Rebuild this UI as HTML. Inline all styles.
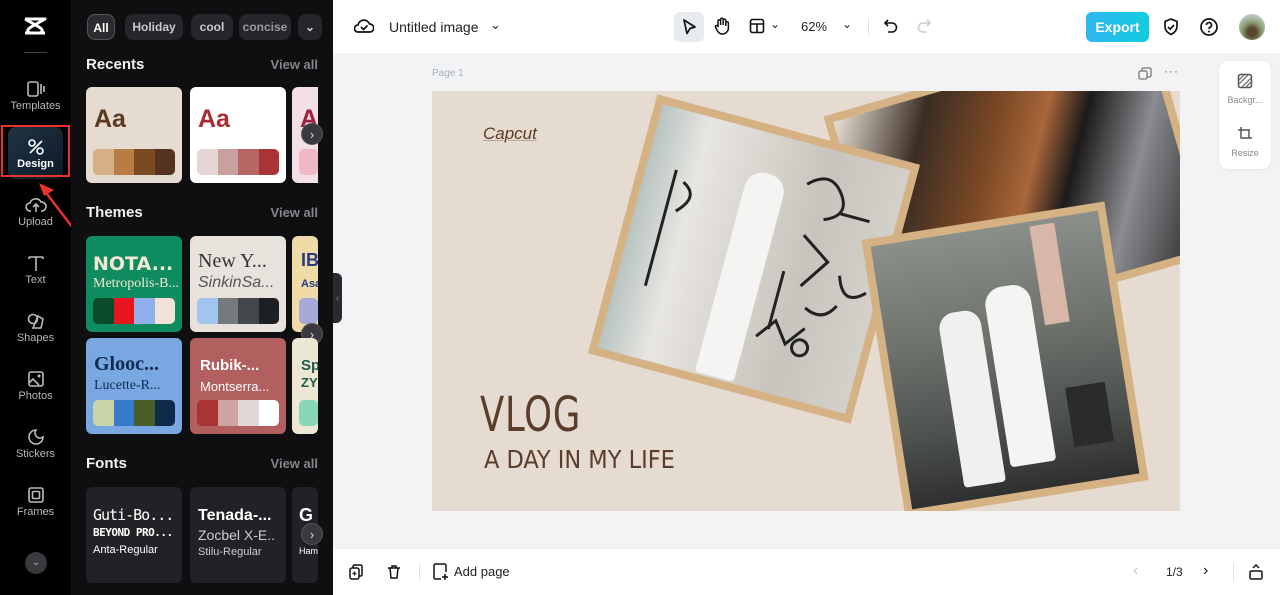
<!DOCTYPE html>
<html><head><meta charset="utf-8"><style>
*{box-sizing:border-box;margin:0;padding:0}
body{width:1280px;height:595px;overflow:hidden;font-family:"Liberation Sans",sans-serif;background:#f1f3f5;position:relative}
.abs{position:absolute;white-space:nowrap}
#rail{left:0;top:0;width:71px;height:595px;background:#000}
.ri{position:absolute;left:0;width:71px;text-align:center;color:#b8b8bc;font-size:11px}
.ri svg{display:block;margin:0 auto 2px}
#panel{left:71px;top:0;width:262px;height:595px;background:#0f0f11}
.chip{position:absolute;top:14px;height:26px;border-radius:8px;background:#26262a;color:#c9c9cc;font-size:12px;font-weight:bold;line-height:26px;text-align:center}
.h{position:absolute;left:15px;color:#f2f2f2;font-size:15px;font-weight:bold}
.va{position:absolute;right:15px;color:#85858a;font-size:13px;font-weight:bold}
.card{position:absolute;width:96px;height:96px;border-radius:6px;overflow:hidden}
.sw{position:absolute;left:7px;right:7px;height:26px;border-radius:5px;overflow:hidden;display:flex}
.sw i{flex:1}
.nxt{position:absolute;width:22px;height:22px;border-radius:50%;background:#3a3a3e;color:#ddd;font-size:13px;line-height:21px;text-align:center;border:1px solid #555}
#top{left:333px;top:0;width:947px;height:53px;background:#fff}
#bot{left:333px;top:549px;width:947px;height:46px;background:#fff}
#page{left:432px;top:91px;width:748px;height:420px;background:#e6dbd1;overflow:hidden}
.fr{position:absolute;background:#d5b283;padding:8px}
.fr>div{width:100%;height:100%;position:relative;overflow:hidden}
</style></head><body>
<div id="rail" class="abs">
  <svg class="abs" style="left:22px;top:16px" width="26" height="20" viewBox="0 0 26 20"><path d="M3 3 L23 3 L9 11 Q3 15 8 17 L23 17 M3 17 L18 17 M3 3 L17 11 Q23 15 18 17" fill="none" stroke="#fff" stroke-width="3" stroke-linejoin="round"/></svg>
  <div class="abs" style="left:24px;top:52px;width:23px;height:1px;background:#444"></div>
  <div class="ri" style="top:80px"><svg width="22" height="18" viewBox="0 0 22 18"><rect x="3" y="2" width="10" height="14" rx="2" fill="none" stroke="#bbb" stroke-width="1.6"/><path d="M16 4v10M19 6v6" stroke="#bbb" stroke-width="1.6"/></svg>Templates</div>
  <div class="abs" style="left:8px;top:127px;width:55px;height:52px;border-radius:8px;background:linear-gradient(135deg,#203445,#0d1a26)"></div>
  <div class="abs" style="left:1px;top:125px;width:69px;height:52px;border:2px solid #e8322f"></div>
  <div class="ri" style="top:138px;color:#fff;font-weight:bold"><svg width="20" height="18" viewBox="0 0 20 18"><circle cx="6" cy="5" r="3" fill="none" stroke="#fff" stroke-width="1.6"/><circle cx="14" cy="13" r="3" fill="none" stroke="#fff" stroke-width="1.6"/><path d="M4 15 L16 3" stroke="#fff" stroke-width="1.6"/></svg>Design</div>
  <svg class="abs" style="left:36px;top:180px" width="44" height="56" viewBox="0 0 44 56"><path d="M40 52 L8 10" stroke="#e8322f" stroke-width="2.5"/><path d="M3 3 L18 10 L8 16 Z" fill="#e8322f"/></svg>
  <div class="ri" style="top:196px"><svg width="22" height="18" viewBox="0 0 22 18"><path d="M6 15 H5 a4 4 0 0 1 0-8 a6 6 0 0 1 11-1 a4 4 0 0 1 1 9 h-1 M11 16 V8 M8 11 l3-3 3 3" fill="none" stroke="#bbb" stroke-width="1.6"/></svg>Upload</div>
  <div class="ri" style="top:254px"><svg width="22" height="18" viewBox="0 0 22 18"><path d="M4 3H18M11 3V17M4 3v2M18 3v2" fill="none" stroke="#bbb" stroke-width="1.6"/></svg>Text</div>
  <div class="ri" style="top:312px"><svg width="22" height="18" viewBox="0 0 22 18"><circle cx="8" cy="7" r="4.5" fill="none" stroke="#bbb" stroke-width="1.6"/><path d="M13 4l5 3-2 9H8z" fill="none" stroke="#bbb" stroke-width="1.6"/></svg>Shapes</div>
  <div class="ri" style="top:370px"><svg width="22" height="18" viewBox="0 0 22 18"><rect x="4" y="2" width="14" height="14" rx="2" fill="none" stroke="#bbb" stroke-width="1.6"/><path d="M4 13l4-4 6 6" fill="none" stroke="#bbb" stroke-width="1.6"/><circle cx="14" cy="6" r="1.5" fill="#bbb"/></svg>Photos</div>
  <div class="ri" style="top:428px"><svg width="22" height="18" viewBox="0 0 22 18"><path d="M11 2a7 7 0 1 0 7 7 a5 5 0 0 1-7-7z" fill="none" stroke="#bbb" stroke-width="1.6"/></svg>Stickers</div>
  <div class="ri" style="top:486px"><svg width="22" height="18" viewBox="0 0 22 18"><rect x="4" y="2" width="14" height="14" rx="2" fill="none" stroke="#bbb" stroke-width="1.6"/><rect x="7.5" y="5.5" width="7" height="7" rx="1" fill="none" stroke="#bbb" stroke-width="1.6"/></svg>Frames</div>
  <div class="abs" style="left:25px;top:552px;width:22px;height:22px;border-radius:50%;background:#3a3a3e;color:#bbb;font-size:10px;text-align:center;line-height:22px">&#8964;</div>
</div>
<div id="panel" class="abs">
  <div class="chip" style="left:16px;width:28px;background:#2c2c30;border:1px solid #555;color:#fff">All</div>
  <div class="chip" style="left:54px;width:58px">Holiday</div>
  <div class="chip" style="left:120px;width:42px">cool</div>
  <div class="chip" style="left:168px;width:52px;color:#9a9a9d">concise</div>
  <div class="chip" style="left:227px;width:24px">&#8964;</div>
  <div class="h" style="top:56px">Recents</div><div class="va" style="top:57px">View all</div>
  <div class="card" style="left:15px;top:87px;background:#e6dbd0"><div class="abs" style="left:8px;top:18px;font-size:25px;font-weight:bold;color:#5a3a20">Aa</div><div class="sw" style="top:62px"><i style="background:#d7b186"></i><i style="background:#b87d45"></i><i style="background:#7b4a22"></i><i style="background:#553320"></i></div></div>
  <div class="card" style="left:119px;top:87px;background:#fff"><div class="abs" style="left:8px;top:18px;font-size:25px;font-weight:bold;color:#a82c33">Aa</div><div class="sw" style="top:62px"><i style="background:#e5d6d6"></i><i style="background:#c9a0a0"></i><i style="background:#b76565"></i><i style="background:#a93436"></i></div></div>
  <div class="card" style="left:221px;top:87px;width:26px;background:#f3e0e4;border-radius:6px 0 0 6px"><div class="abs" style="left:8px;top:18px;font-size:25px;font-weight:bold;color:#a02040">A</div><div class="sw" style="top:62px;right:0"><i style="background:#f0b8c4"></i></div></div>
  <div class="nxt" style="left:230px;top:123px">›</div>
  <div class="h" style="top:204px">Themes</div><div class="va" style="top:205px">View all</div>
  <div class="card" style="left:15px;top:236px;background:#0e8c5f"><div class="abs" style="left:7px;top:17px;font-size:19px;font-weight:900;color:#f3e7d6;font-family:'DejaVu Sans'">NOTA...</div><div class="abs" style="left:7px;top:40px;font-size:14px;color:#f3e7d6;font-family:'Liberation Serif'">Metropolis-B...</div><div class="sw" style="top:62px"><i style="background:#0c4a2c"></i><i style="background:#e8141e"></i><i style="background:#8fb0ea"></i><i style="background:#f5e2d6"></i></div></div>
  <div class="card" style="left:119px;top:236px;background:#e8e2dc"><div class="abs" style="left:8px;top:14px;font-size:20px;color:#333;font-family:'Liberation Serif'">New Y...</div><div class="abs" style="left:8px;top:38px;font-size:16px;color:#555;font-style:italic">SinkinSa...</div><div class="sw" style="top:62px"><i style="background:#a1c5ee"></i><i style="background:#777a7d"></i><i style="background:#44474b"></i><i style="background:#1c1f23"></i></div></div>
  <div class="card" style="left:221px;top:236px;width:26px;background:#efdaa8"><div class="abs" style="left:9px;top:14px;font-size:18px;font-weight:bold;color:#2a3a80">IB</div><div class="abs" style="left:9px;top:42px;font-size:11px;font-weight:bold;color:#2a3a80">Asa</div><div class="sw" style="top:62px;right:0"><i style="background:#a7a9d6"></i></div></div>
  <div class="nxt" style="left:230px;top:323px">›</div>
  <div class="card" style="left:15px;top:338px;background:#78a7e2"><div class="abs" style="left:8px;top:15px;font-size:20px;font-weight:bold;color:#0d2c50;font-family:'Liberation Serif'">Glooc...</div><div class="abs" style="left:8px;top:40px;font-size:14px;color:#0d2c50;font-family:'Liberation Serif'">Lucette-R...</div><div class="sw" style="top:62px"><i style="background:#c9d5a8"></i><i style="background:#367acb"></i><i style="background:#485d2a"></i><i style="background:#0d2a48"></i></div></div>
  <div class="card" style="left:119px;top:338px;background:#b1605f"><div class="abs" style="left:10px;top:19px;font-size:15px;font-weight:bold;color:#fff">Rubik-...</div><div class="abs" style="left:10px;top:41px;font-size:13px;color:#fff">Montserra...</div><div class="sw" style="top:62px"><i style="background:#a93436"></i><i style="background:#cea4a3"></i><i style="background:#e3d6d6"></i><i style="background:#fff"></i></div></div>
  <div class="card" style="left:221px;top:338px;width:26px;background:#ece7d3"><div class="abs" style="left:9px;top:19px;font-size:15px;font-weight:bold;color:#1f5c4a">Sp</div><div class="abs" style="left:9px;top:37px;font-size:13px;font-weight:bold;color:#1f5c4a">ZY</div><div class="sw" style="top:62px;right:0"><i style="background:#8ad7b8"></i></div></div>
  <div class="h" style="top:455px">Fonts</div><div class="va" style="top:456px">View all</div>
  <div class="card" style="left:15px;top:487px;background:#222226;color:#fff"><div class="abs" style="left:7px;top:19px;font-size:15px;font-family:'DejaVu Sans Mono';letter-spacing:-1px">Guti-Bo...</div><div class="abs" style="left:7px;top:39px;font-size:11px;font-weight:bold;font-family:'DejaVu Sans Mono';letter-spacing:-0.5px">BEYOND PRO...</div><div class="abs" style="left:7px;top:57px;font-size:11px">Anta-Regular</div></div>
  <div class="card" style="left:119px;top:487px;background:#222226;color:#fff"><div class="abs" style="left:8px;top:20px;font-size:16px;font-weight:bold">Tenada-...</div><div class="abs" style="left:8px;top:40px;font-size:14px;color:#ccc">Zocbel X-E..</div><div class="abs" style="left:8px;top:59px;font-size:11px;color:#ccc">Stilu-Regular</div></div>
  <div class="card" style="left:221px;top:487px;width:26px;background:#222226;color:#fff"><div class="abs" style="left:7px;top:18px;font-size:18px;font-weight:bold">G</div><div class="abs" style="left:7px;top:59px;font-size:9px">Ham</div></div>
  <div class="nxt" style="left:230px;top:523px">›</div>
</div>
<div class="abs" style="left:333px;top:273px;width:9px;height:50px;background:#2a2a2e;border-radius:0 6px 6px 0;color:#888;font-size:9px;line-height:50px;text-align:center">‹</div>
<div id="top" class="abs">
  <svg class="abs" style="left:21px;top:17px" width="20" height="18" viewBox="0 0 20 18"><path d="M5 15H4a3.5 3.5 0 0 1 0-7 a6 6 0 0 1 11.5-1 a4 4 0 0 1 0.5 8H5z M7 10l2.5 2.5 4-4" fill="none" stroke="#111" stroke-width="1.7"/></svg>
  <div class="abs" style="left:56px;top:19px;font-size:14px;color:#222">Untitled image</div>
  <div class="abs" style="left:157px;top:17px;font-size:13px;color:#222">&#8964;</div>
  <div class="abs" style="left:341px;top:12px;width:30px;height:30px;border-radius:6px;background:#e8ecf0"></div>
  <svg class="abs" style="left:348px;top:18px" width="16" height="18" viewBox="0 0 16 18"><path d="M3 2l11 7-5 1.5-3 5z" fill="none" stroke="#111" stroke-width="1.7" stroke-linejoin="round"/></svg>
  <svg class="abs" style="left:380px;top:16px" width="18" height="20" viewBox="0 0 18 20"><path d="M5 11V5a1.3 1.3 0 0 1 2.6 0V9V3.5a1.3 1.3 0 0 1 2.6 0V9V4.5a1.3 1.3 0 0 1 2.6 0V10V7a1.3 1.3 0 0 1 2.6 0v5a6 6 0 0 1-6 6c-3 0-4-1.5-6-5l-1-2a1.3 1.3 0 0 1 2.3-1z" fill="none" stroke="#111" stroke-width="1.5"/></svg>
  <svg class="abs" style="left:416px;top:18px" width="16" height="16" viewBox="0 0 16 16"><rect x="1.5" y="1.5" width="13" height="13" rx="2" fill="none" stroke="#111" stroke-width="1.6"/><path d="M1.5 6H14.5M8 6V14.5" stroke="#111" stroke-width="1.6"/></svg>
  <div class="abs" style="left:437px;top:17px;font-size:12px;color:#222">&#8964;</div>
  <div class="abs" style="left:468px;top:19px;font-size:13px;color:#222">62%</div>
  <div class="abs" style="left:509px;top:17px;font-size:12px;color:#222">&#8964;</div>
  <div class="abs" style="left:535px;top:18px;width:1px;height:18px;background:#e2e4e6"></div>
  <svg class="abs" style="left:550px;top:18px" width="16" height="16" viewBox="0 0 16 16"><path d="M5 2L2 5l3 3M2 5h7a4.5 4.5 0 0 1 0 9H5" fill="none" stroke="#111" stroke-width="1.6"/></svg>
  <svg class="abs" style="left:583px;top:18px" width="16" height="16" viewBox="0 0 16 16"><path d="M11 2l3 3-3 3M14 5H7a4.5 4.5 0 0 0 0 9h4" fill="none" stroke="#ccc" stroke-width="1.6"/></svg>
  <div class="abs" style="left:753px;top:12px;width:63px;height:30px;border-radius:6px;background:linear-gradient(90deg,#2fb6f0,#13cce0);color:#fff;font-weight:bold;font-size:14px;line-height:30px;text-align:center">Export</div>
  <svg class="abs" style="left:829px;top:17px" width="18" height="20" viewBox="0 0 18 20"><path d="M9 2l6 2.5v5c0 4-3 6.5-6 8-3-1.5-6-4-6-8v-5z M6 10l2.2 2.2L12 8" fill="none" stroke="#111" stroke-width="1.7"/></svg>
  <svg class="abs" style="left:866px;top:17px" width="20" height="20" viewBox="0 0 20 20"><circle cx="10" cy="10" r="8" fill="none" stroke="#111" stroke-width="1.7"/><path d="M7.5 8a2.5 2.5 0 1 1 3.5 2.3c-.8.4-1 1-1 1.7" fill="none" stroke="#111" stroke-width="1.7"/><circle cx="10" cy="14.5" r="1" fill="#111"/></svg>
  <div class="abs" style="left:906px;top:14px;width:26px;height:26px;border-radius:50%;background:radial-gradient(circle at 50% 70%,#5a4630 20%,#8aa070 45%,#b9c7c0 75%)"></div>
</div>
<div class="abs" style="left:432px;top:68px;font-size:10px;color:#aab0b6">Page 1</div>
<svg class="abs" style="left:1138px;top:67px" width="14" height="14" viewBox="0 0 14 14"><rect x="1" y="4" width="8" height="8" rx="1.5" fill="none" stroke="#777" stroke-width="1.3"/><path d="M4 4V2.5A1.5 1.5 0 0 1 5.5 1H11.5A1.5 1.5 0 0 1 13 2.5V8.5A1.5 1.5 0 0 1 11.5 10H9" fill="none" stroke="#777" stroke-width="1.3"/></svg>
<div class="abs" style="left:1164px;top:64px;font-size:12px;color:#666;letter-spacing:1px">···</div>
<div class="abs" style="left:1219px;top:61px;width:52px;height:108px;background:#fff;border-radius:10px;box-shadow:0 1px 4px rgba(0,0,0,.06)"></div>
<svg class="abs" style="left:1237px;top:73px" width="16" height="16" viewBox="0 0 16 16"><rect x="1.5" y="1.5" width="13" height="13" rx="2" fill="none" stroke="#555" stroke-width="1.5"/><path d="M2 11L11 2M5 14L14 5M2 7L7 2M9 14L14 9" stroke="#777" stroke-width="1.3"/></svg>
<div class="abs" style="left:1219px;top:95px;width:52px;text-align:center;font-size:9px;color:#888">Backgr...</div>
<svg class="abs" style="left:1237px;top:126px" width="16" height="16" viewBox="0 0 16 16"><path d="M4 1v11h11M1 4h11v8" fill="none" stroke="#555" stroke-width="1.5"/></svg>
<div class="abs" style="left:1219px;top:148px;width:52px;text-align:center;font-size:9px;color:#888">Resize</div>
<div id="page" class="abs">
  <div class="fr" style="left:418px;top:-26px;width:340px;height:240px;transform:rotate(-16deg)"><div style="background:linear-gradient(120deg,#e8e0d6 0%,#3a2d24 22%,#7a4824 40%,#a8663a 52%,#1c1a1a 62%,#8a8c90 78%,#242424 100%)"></div></div>
  <div class="fr" style="left:186px;top:34px;width:272px;height:268px;transform:rotate(15deg)"><div style="background:linear-gradient(90deg,#b8c4c0 0%,#e8e6e2 20%,#d8d4ce 45%,#c8c4bd 70%,#d4d0ca 100%)">
    <div class="abs" style="left:100px;top:40px;width:40px;height:210px;background:#f4f4f2;border-radius:18px 18px 4px 4px"></div>
    <svg class="abs" style="left:0;top:0" width="260" height="260" viewBox="0 0 260 260"><g fill="none" stroke="#222" stroke-width="3"><path d="M160 40q20-20 35 0t-10 30M170 90l30 20-20 30M190 160q20 10 30-10M150 200l15-20 15 20 15-20M200 60h30M30 60v120M215 120q10 30 30 10"/><circle cx="195" cy="200" r="8"/><path d="M160 130v60M40 70q20 10 0 30"/></g></svg>
  </div></div>
  <div class="fr" style="left:450px;top:128px;width:246px;height:282px;transform:rotate(-9deg)"><div style="background:linear-gradient(180deg,#8b8f8a 0%,#6e726d 40%,#4c504d 75%,#2e302f 100%)">
    <div class="abs" style="left:160px;top:5px;width:25px;height:100px;background:#d8b6a8"></div>
    <div class="abs" style="left:55px;top:78px;width:42px;height:175px;background:#f0f0ee;border-radius:16px 16px 4px 4px"></div>
    <div class="abs" style="left:104px;top:60px;width:46px;height:180px;background:#f4f4f2;border-radius:18px 18px 4px 4px"></div>
    <div class="abs" style="left:170px;top:170px;width:40px;height:60px;background:#2a2c2b"></div>
  </div></div>
  <div class="abs" style="left:51px;top:33px;font-size:17px;font-style:italic;color:#5b3a22;text-decoration:underline;text-decoration-color:#b9a89a">Capcut</div>
  <div class="abs" style="left:48px;top:296px;font-size:48px;color:#5b3d2b;font-family:'DejaVu Sans Condensed','DejaVu Sans',sans-serif;font-weight:200;transform:scaleX(.82);transform-origin:left;letter-spacing:1px">VLOG</div>
  <div class="abs" style="left:52px;top:354px;font-size:25px;color:#5b3d2b;font-family:'DejaVu Sans Condensed','DejaVu Sans',sans-serif;font-weight:200">A DAY IN MY LIFE</div>
</div>
<div id="bot" class="abs">
  <svg class="abs" style="left:15px;top:15px" width="16" height="16" viewBox="0 0 16 16"><rect x="2" y="4" width="9" height="11" rx="2" fill="none" stroke="#111" stroke-width="1.5"/><path d="M5 4V2.5A1.5 1.5 0 0 1 6.5 1h6A1.5 1.5 0 0 1 14 2.5v8a1.5 1.5 0 0 1-1.5 1.5H11" fill="none" stroke="#111" stroke-width="1.5"/><path d="M6.5 7.5v4M4.5 9.5h4" stroke="#111" stroke-width="1.3"/></svg>
  <svg class="abs" style="left:53px;top:15px" width="16" height="16" viewBox="0 0 16 16"><path d="M2 4h12M6 4V2h4v2M4 4l1 10h6l1-10" fill="none" stroke="#111" stroke-width="1.5"/></svg>
  <div class="abs" style="left:86px;top:14px;width:1px;height:18px;background:#e2e4e6"></div>
  <svg class="abs" style="left:99px;top:14px" width="18" height="18" viewBox="0 0 18 18"><path d="M9 16H3.5A1.5 1.5 0 0 1 2 14.5v-12A1.5 1.5 0 0 1 3.5 1h9A1.5 1.5 0 0 1 14 2.5V9M13 11v6M10 14h6" fill="none" stroke="#111" stroke-width="1.5"/></svg>
  <div class="abs" style="left:121px;top:15px;font-size:13px;color:#222">Add page</div>
  <div class="abs" style="left:800px;top:13px;font-size:16px;color:#c8c8c8">‹</div>
  <div class="abs" style="left:833px;top:16px;font-size:12px;color:#222">1/3</div>
  <div class="abs" style="left:870px;top:13px;font-size:16px;color:#222">›</div>
  <div class="abs" style="left:900px;top:14px;width:1px;height:18px;background:#e2e4e6"></div>
  <svg class="abs" style="left:915px;top:14px" width="16" height="18" viewBox="0 0 16 18"><rect x="2" y="8" width="12" height="8" rx="1.5" fill="none" stroke="#111" stroke-width="1.5"/><path d="M5 5l3-3 3 3" fill="none" stroke="#111" stroke-width="1.5"/></svg>
</div>
</body></html>
